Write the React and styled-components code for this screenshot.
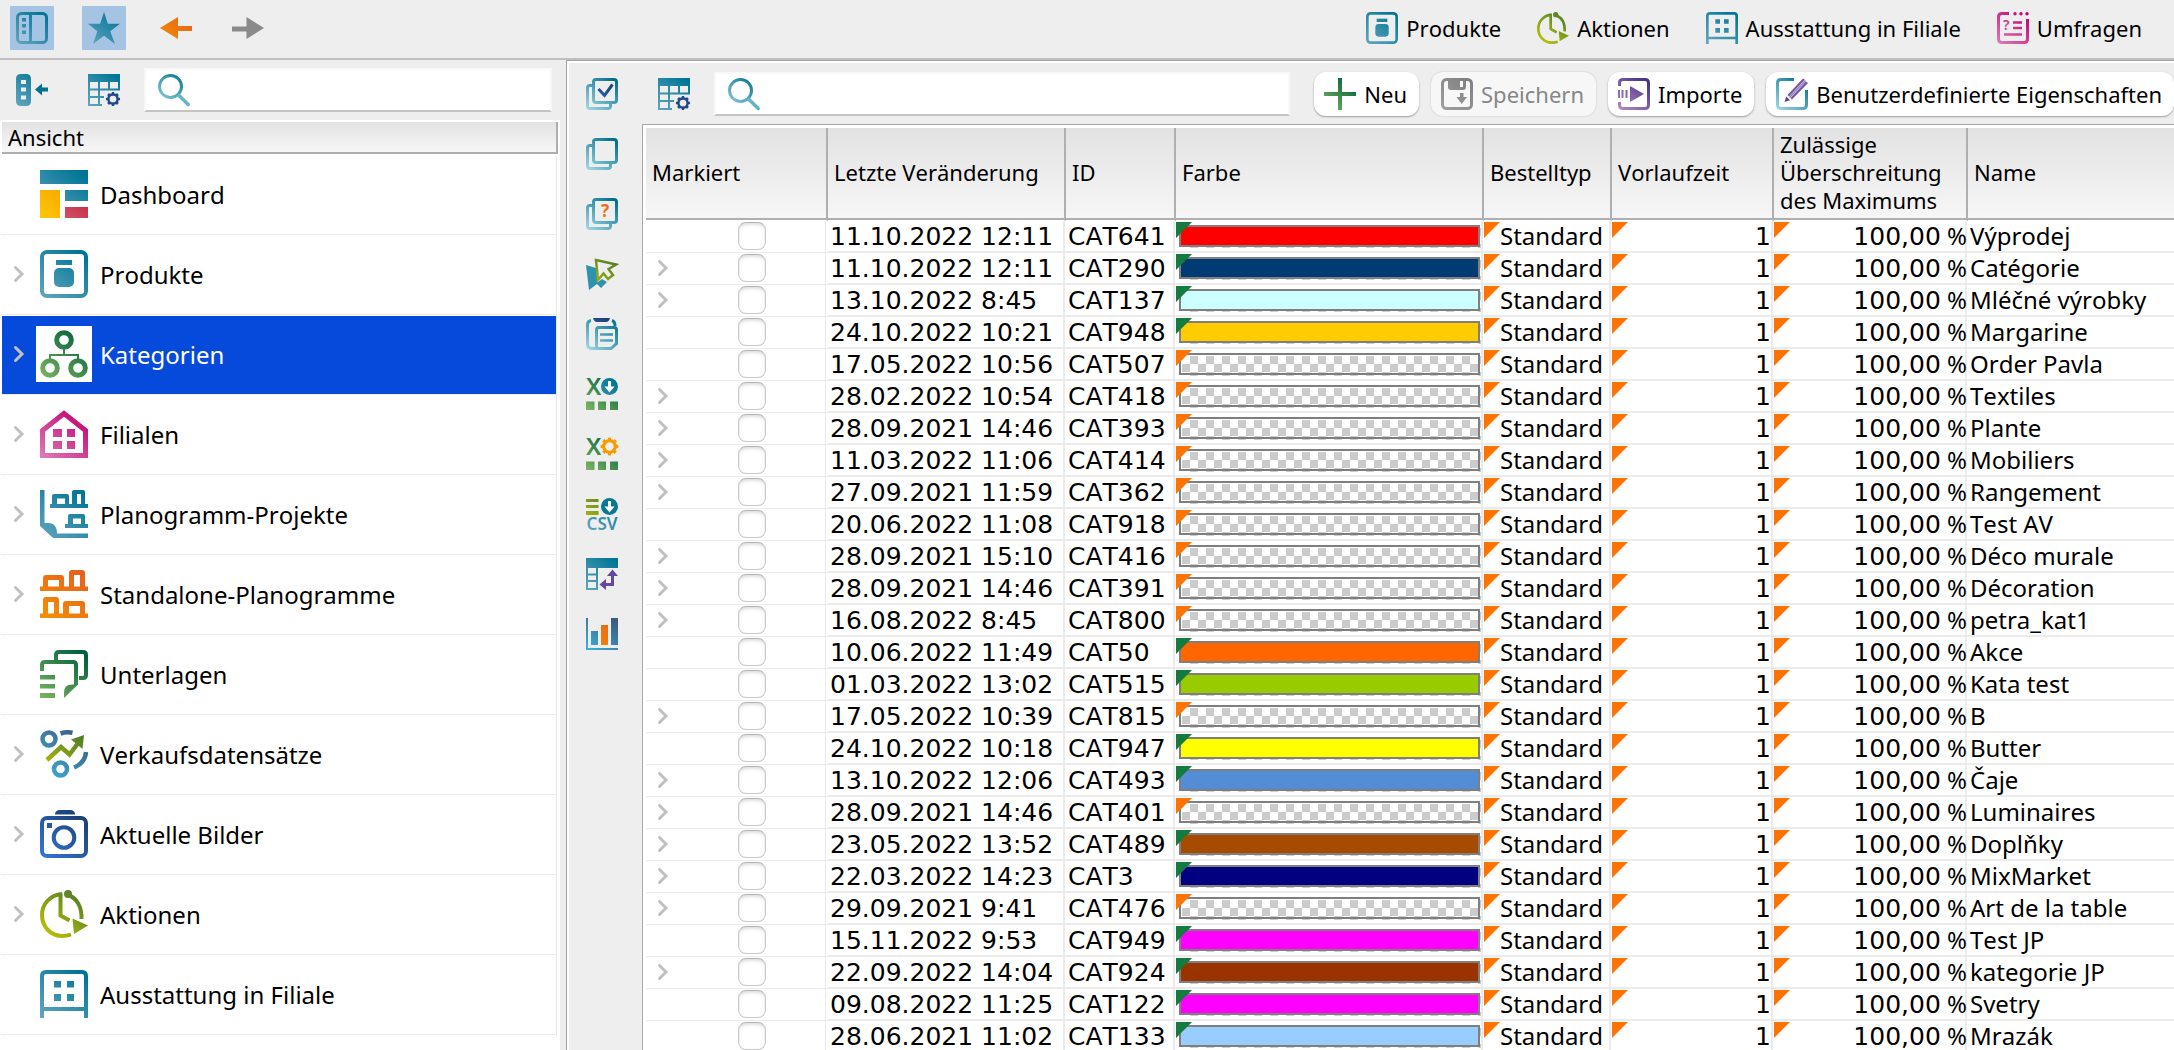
import React, { useId, useState } from "react";
import styled, { createGlobalStyle, css } from "styled-components";

const sans = '"Noto Sans", "Open Sans", sans-serif';
const wide = '"DejaVu Sans", "Noto Sans", sans-serif';
const surface = "#eeeeee";
const hairline = "#ebebeb";

const GlobalStyle = createGlobalStyle`
  *, *::before, *::after { box-sizing: border-box; }
  body { margin: 0; background: ${surface}; color: #000; font-family: ${sans}; font-kerning: none; }
  button, input { font: inherit; color: inherit; }
  svg { display: block; overflow: visible; }
`;

/* ---------- icons ---------- */

const tones = {
  teal: ["#64a6bf", "#007595"],
  aqua: ["#a5dbe6", "#00708f"],
  green: ["#7fb662", "#00603c"],
  magenta: ["#dd7fb9", "#c4006f"],
  orange: ["#f39200", "#e8601c"],
  lime: ["#c9c900", "#4a7a2c"],
  blue: ["#3578dc", "#1a3c6e"],
  sky: ["#3cb4dc", "#3d5a80"],
  purple: ["#b98cc0", "#46338a"],
  amber: ["#ffc800", "#f39200"],
  red: ["#d9667c", "#b8142c"],
  grey: ["#a0a0a0", "#808080"],
};

function Icon({ box = 32, size = box, use, children }) {
  const id = useId();
  const paint = {};
  use.forEach((name) => {
    paint[name] = `url(#${id}${name})`;
  });
  return (
    <svg width={size} height={size} viewBox={`0 0 ${box} ${box}`} fill="none" aria-hidden="true">
      <defs>
        {use.map((name) => (
          <linearGradient key={name} id={id + name} gradientUnits="userSpaceOnUse" x1="0" y1={box} x2={box * 0.8} y2="0">
            <stop offset="0" stopColor={tones[name][0]} />
            <stop offset="1" stopColor={tones[name][1]} />
          </linearGradient>
        ))}
      </defs>
      {children(paint)}
    </svg>
  );
}

const DashboardIcon = () => (
  <Icon box={48} use={["teal", "amber", "red"]}>
    {(p) => (
      <>
        <path fill={p.teal} d="M0 0h48v14H0zM25 20h23v11H25z" />
        <path fill={p.amber} d="M0 20h20v28H0z" />
        <path fill={p.red} d="M25 37h23v11H25z" />
      </>
    )}
  </Icon>
);

const ProductIcon = ({ size }) => (
  <Icon box={48} size={size} use={["teal"]}>
    {(p) => (
      <>
        <rect x="2" y="2" width="44" height="44" rx="5" stroke={p.teal} strokeWidth="4" />
        <rect x="16" y="10" width="16" height="5" fill={p.teal} />
        <rect x="14" y="18" width="20" height="19" rx="5" fill={p.teal} />
      </>
    )}
  </Icon>
);

const CategoryIcon = () => (
  <Icon box={48} use={["green"]}>
    {(p) => (
      <>
        <g stroke={p.green} strokeWidth="5">
          <circle cx="24" cy="10" r="7.3" />
          <circle cx="10" cy="38" r="7.3" />
          <circle cx="38" cy="38" r="7.3" />
        </g>
        <path stroke={p.green} strokeWidth="2" d="M24 19v6M10 30v-5h28v5" />
      </>
    )}
  </Icon>
);

const StoreIcon = () => (
  <Icon box={48} use={["magenta"]}>
    {(p) => (
      <>
        <path stroke={p.magenta} strokeWidth="5" d="M2.5 20.5 24 3.5l21.500 17v25h-43z" />
        <path fill={p.magenta} d="M13 19h9v8h-9zM27 19h8v8h-8zM13 31h9v8h-9zM27 31h8v8h-8z" />
      </>
    )}
  </Icon>
);

const PlanogramIcon = () => (
  <Icon box={48} use={["teal"]}>
    {(p) => (
      <>
        <path fill={p.teal} d="M0 0h4.500v33H8c6 0 9 4 9 10.500h31V48H13L0 36z" />
        <path fill={p.teal} fillRule="evenodd" d="M10 14h2V6q0-2 2-2h13q2 0 2 2v8h3V2q0-2 2-2h9q2 0 2 2v12h3v4H10zM17 8.500v5.500h8V8.500zM37 4v10h4V4z" />
        <path fill={p.teal} fillRule="evenodd" d="M25 34h3v-8q0-2 2-2h13q2 0 2 2v8h3v4H25zM33 28.500v5.500h8v-5.500z" />
      </>
    )}
  </Icon>
);

const ShelfIcon = () => (
  <Icon box={48} use={["orange"]}>
    {(p) => (
      <>
        <path fill={p.orange} fillRule="evenodd" d="M0 16.500h3V8q0-3 3-3h15q3 0 3 3v8.500h5V3q0-3 3-3h10q3 0 3 3v13.500h3V21H0zM8 10v6.500h11V10zM34 5v11.500h6V5z" />
        <path fill={p.orange} fillRule="evenodd" d="M0 43.500h3V30q0-3 3-3h10q3 0 3 3v13.500h4V34q0-3 3-3h16q3 0 3 3v9.500h3V48H0zM8 32v11.500h6V32zM29 36v7.500h11V36z" />
      </>
    )}
  </Icon>
);

const DocumentsIcon = () => (
  <Icon box={48} use={["green"]}>
    {(p) => (
      <>
        <path stroke={p.green} strokeWidth="4" d="M16 11V5q0-3 3-3h24q3 0 3 3v20q0 3-3 3h-4M2 21v-6q0-3 3-3h28q3 0 3 3v20" />
        <path fill={p.green} d="M0 25h15v4.500H0zM0 34h15v4.500H0zM0 43h15v5H0zM38 34.500h-6q-8 0-8 8V48z" />
      </>
    )}
  </Icon>
);

const SalesIcon = () => (
  <Icon box={48} use={["sky", "lime"]}>
    {(p) => (
      <>
        <g stroke={p.sky} strokeWidth="4.500">
          <circle cx="9" cy="9" r="6.500" />
          <circle cx="20.500" cy="39" r="6.500" />
          <path d="M20.500 3.500q6-2 12-.8M46 22q-1 11-12 15.500" />
        </g>
        <path stroke={p.lime} strokeWidth="4.500" d="M7 30 21 17l8.500 7.500L39 12" />
        <path fill={p.lime} d="m44 5-13 4.500L42.500 19z" />
      </>
    )}
  </Icon>
);

const CameraIcon = () => (
  <Icon box={48} use={["blue"]}>
    {(p) => (
      <>
        <path fill={p.blue} d="M15 4.500Q15 0 20 0h10q5 0 5 4.500z" />
        <rect x="2" y="8" width="44" height="38" rx="5" stroke={p.blue} strokeWidth="4" />
        <circle cx="24" cy="27.500" r="10.300" stroke={p.blue} strokeWidth="4" />
        <path fill={p.blue} d="M7 13h5v5H7z" />
      </>
    )}
  </Icon>
);

const ClockIcon = ({ size }) => (
  <Icon box={48} size={size} use={["lime"]}>
    {(p) => (
      <>
        <g stroke={p.lime} strokeWidth="4">
          <path d="M22 4C10 5 2 14 2 25c0 12 9 21 20 21q5 0 9-1.500M28 5c9 3 14 12 13.500 24" />
          <path d="M20.500 3v22.500l9 5" />
        </g>
        <circle cx="28" cy="4" r="4" fill={p.lime} />
        <path fill={p.lime} d="m32.500 28.500 15.500 7-14 8.500z" />
      </>
    )}
  </Icon>
);

const FittingsIcon = ({ size }) => (
  <Icon box={48} size={size} use={["teal"]}>
    {(p) => (
      <>
        <path stroke={p.teal} strokeWidth="4" d="M2 48V6q0-4 4-4h36q4 0 4 4v42M2 39h44" />
        <path fill={p.teal} d="M14 11h7v6.500h-7zM27 11h7v6.500h-7zM14 24h7v7h-7zM27 24h7v7h-7z" />
      </>
    )}
  </Icon>
);

const SurveyIcon = () => (
  <Icon use={["magenta"]}>
    {(p) => (
      <>
        <path stroke={p.magenta} strokeWidth="3" d="M12 1.500H5Q1.500 1.500 1.500 5v22q0 3.500 3.500 3.500h22q3.500 0 3.500-3.500V7" />
        <path stroke={p.magenta} strokeWidth="2.500" d="M16 10.500h9M16 16h9M7 22.500h18" />
        <g fill={p.magenta}>
          <circle cx="18" cy="1.800" r="1.700" />
          <circle cx="24" cy="1.800" r="1.700" />
          <circle cx="30" cy="1.800" r="1.700" />
          <text x="6" y="18" fontFamily={sans} fontSize="14" fontWeight="600">?</text>
        </g>
      </>
    )}
  </Icon>
);

const SidebarIcon = () => (
  <Icon use={["teal"]}>
    {(p) => (
      <>
        <rect x="1.500" y="1.500" width="29" height="29" rx="4" stroke={p.teal} strokeWidth="3" />
        <path stroke={p.teal} strokeWidth="3" d="M14.500 2v28" />
        <path fill={p.teal} d="M6 6h4v3.500H6zM6 12h4v3.500H6zM6 18.500h4V22H6z" />
      </>
    )}
  </Icon>
);

const StarIcon = () => (
  <Icon use={["teal"]}>
    {(p) => <path fill={p.teal} d="m16 0 3.800 11.800H32l-9.800 7.400L27 32l-11-8.200L5 32l4.300-12.800L0 11.800h12.200z" />}
  </Icon>
);

const BackIcon = () => (
  <Icon use={["orange"]}>{(p) => <path fill={p.orange} d="M0 16 18 5v9h14v5H18v8z" />}</Icon>
);

const ForwardIcon = () => (
  <Icon use={["grey"]}>{() => <path fill="#8a8a8a" d="M32 16 14.500 5v9.500H0v5h14.500V27z" />}</Icon>
);

const CollapseIcon = () => (
  <Icon use={["teal"]}>
    {(p) => (
      <>
        <path fill={p.teal} fillRule="evenodd" d="M5 0h5q5 0 5 5v22q0 5-5 5H5q-5 0-5-5V5q0-5 5-5zM5 6v4h5V6zM5 13.500v4h5v-4zM5 21.500v4h5v-4z" />
        <path fill="#00728f" d="m19 15.500 7-6V13.500h6v4h-6v4z" />
      </>
    )}
  </Icon>
);

const Gear = ({ cx, cy, r, color }) => (
  <g stroke={color} transform={`translate(${cx} ${cy})`}>
    <circle r={r * 0.66} strokeWidth={r * 0.36} />
    <circle r={r * 0.86} strokeWidth={r * 0.3} pathLength="16" strokeDasharray="1 1" strokeDashoffset="0.500" />
  </g>
);

const TableSettingsIcon = () => (
  <Icon use={["teal", "blue"]}>
    {(p) => (
      <>
        <path fill={p.teal} d="M0 0h32v8H0z" />
        <path stroke={p.teal} strokeWidth="2" d="M1 8v23h13M0 15.500h32M0 23h16M11 8v23M21 8v7.500M31 8v8" />
        <Gear cx={25} cy={25} r={7} color="#1f4a8c" />
      </>
    )}
  </Icon>
);

const SearchIcon = () => (
  <Icon use={["aqua"]}>
    {(p) => (
      <>
        <circle cx="12.500" cy="12.500" r="11" stroke={p.aqua} strokeWidth="3" />
        <path stroke="#62b4c6" strokeWidth="3.500" strokeLinecap="round" d="m21 21.500 9.200 9" />
      </>
    )}
  </Icon>
);

const StackIcon = ({ children }) => (
  <Icon use={["aqua", "blue", "orange"]}>
    {(p) => (
      <>
        <rect x="7.500" y="1.500" width="23" height="23" rx="2.500" stroke={p.aqua} strokeWidth="3" />
        <path stroke={p.aqua} strokeWidth="3" d="M6 7.500H4Q1.500 7.500 1.500 10v18q0 2.500 2.500 2.500h18q2.500 0 2.500-2.500v-2" />
        {children && children(p)}
      </>
    )}
  </Icon>
);

const CheckAllIcon = () => (
  <StackIcon>{(p) => <path stroke={p.blue} strokeWidth="3" d="m12.500 11 6 6.500 8-11" />}</StackIcon>
);
const UncheckAllIcon = () => <StackIcon />;
const InvertIcon = () => (
  <StackIcon>
    {(p) => (
      <text x="19" y="19" textAnchor="middle" fontFamily={sans} fontSize="17" fontWeight="700" fill={p.orange}>?</text>
    )}
  </StackIcon>
);

const PointerIcon = () => (
  <Icon use={["aqua", "lime"]}>
    {(p) => (
      <>
        <path fill="#2f92ad" d="m0 7 10 3 2 14 4-3 5 3-6 6-4-4-8 6z" />
        <path fill={surface} stroke={p.lime} strokeWidth="2.500" d="M10 2 30 6.500 22.500 11l4.500 6-5 4-4.500-5.500L12 22z" />
      </>
    )}
  </Icon>
);

const ClipboardIcon = () => (
  <Icon use={["aqua", "blue"]}>
    {(p) => (
      <>
        <path fill={p.blue} d="M7 0h17q-1 4-4 4h-9Q8 4 7 0z" />
        <path stroke={p.aqua} strokeWidth="3" d="M5 2.500Q1.500 3 1.500 7v19q0 4.500 4.500 4.500h19l5.500-5V12q0-2.500-2.500-2.500H13Q10.500 9.500 10.500 12v18M26 2.500q3 1 3 5.500" />
        <path stroke={p.aqua} strokeWidth="2.500" d="M14 16.400h13M14 22.600h13" />
      </>
    )}
  </Icon>
);

const SheetSquares = ({ fill }) => <path fill={fill} d="M0 23.500h8.500V32H0zM12 23.500h8V32h-8zM24 23.500h8V32h-8z" />;
const DownBadge = ({ fill }) => (
  <>
    <circle cx="23.500" cy="8.500" r="8.500" fill={fill} />
    <path fill="#fff" d="M22 3h3v5.500h3.500l-5 6-5-6H22z" />
  </>
);

const ExcelExportIcon = () => (
  <Icon use={["green", "teal"]}>
    {(p) => (
      <>
        <text x="0" y="17" fontFamily={sans} fontSize="24" fontWeight="600" fill={p.green}>X</text>
        <DownBadge fill={p.teal} />
        <SheetSquares fill={p.green} />
      </>
    )}
  </Icon>
);

const ExcelSettingsIcon = () => (
  <Icon use={["green", "amber"]}>
    {(p) => (
      <>
        <text x="0" y="17" fontFamily={sans} fontSize="24" fontWeight="600" fill={p.green}>X</text>
        <Gear cx={23.5} cy={8.5} r={8.8} color="#f59c00" />
        <SheetSquares fill={p.green} />
      </>
    )}
  </Icon>
);

const CsvIcon = () => (
  <Icon use={["lime", "teal"]}>
    {(p) => (
      <>
        <path fill={p.lime} d="M0 1h12.500v3H0zM0 7h12.500v3H0zM0 13h12.500v4H0z" />
        <DownBadge fill="#087896" />
        <text x="16" y="32" textAnchor="middle" fontFamily={sans} fontSize="17" fontWeight="600" fill={p.teal}>CSV</text>
      </>
    )}
  </Icon>
);

const PivotIcon = () => (
  <Icon use={["teal", "purple"]}>
    {(p) => (
      <>
        <path fill={p.teal} d="M0 0h32v10H0z" />
        <path stroke={p.teal} strokeWidth="2" d="M1 10v21h10V10M1 16.500h10M1 23h10" />
        <path fill="#64499a" d="m26.500 11.500 5.500 6.500h-4v10h-8v4l-6.500-5.500L20 21v4h5v-7h-4z" />
      </>
    )}
  </Icon>
);

const ChartIcon = () => (
  <Icon use={["sky", "orange"]}>
    {(p) => (
      <>
        <path stroke={p.sky} strokeWidth="2" d="M1 0v31h31" />
        <path fill={p.sky} d="M5 13h7v14H5zM25 0h7v27h-7z" />
        <path fill={p.orange} d="M15 7h7v20h-7z" />
      </>
    )}
  </Icon>
);

const PlusIcon = () => (
  <Icon use={["green"]}>{(p) => <path fill={p.green} d="M14 0h4v14h14v4H18v14h-4V18H0v-4h14z" />}</Icon>
);

const SaveIcon = () => (
  <Icon use={["grey"]}>
    {(p) => (
      <>
        <rect x="1.500" y="1.500" width="29" height="29" rx="4" stroke={p.grey} strokeWidth="3" />
        <path fill={p.grey} fillRule="evenodd" d="M7 1h18v8q0 3-3 3H10q-3 0-3-3zM19 3v6h3V3zM19 15h3.500v4H26l-5.300 7-5.200-7H19z" />
      </>
    )}
  </Icon>
);

const ImportIcon = () => (
  <Icon use={["purple"]}>
    {(p) => (
      <>
        <path stroke={p.purple} strokeWidth="3" d="M1.500 8V5q0-3.500 3.500-3.500h22q3.500 0 3.500 3.500v22q0 3.500-3.500 3.500H5Q1.500 30.500 1.500 27v-3" />
        <path fill={p.purple} d="M0 12h2v8H0zM3.500 12h2v8h-2zM7.500 12h2v8h-2zM12 8l14 8-14 8z" />
      </>
    )}
  </Icon>
);

const EditIcon = () => (
  <Icon use={["aqua"]}>
    {(p) => (
      <>
        <path stroke={p.aqua} strokeWidth="3" d="M18 1.500H5Q1.500 1.500 1.500 5v22q0 3.500 3.500 3.500h22q3.500 0 3.500-3.500V12" />
        <path fill="#5b429a" d="m8.500 24 1.800-5.500 3.700 3.700z" />
        <path fill="#7457a6" d="M11.500 17 27 .5l1.800 1.300L13 18.500zM14.500 20 30 3.500 32 5 16 21.500z" />
        <path stroke="#9c7fba" strokeWidth="1.500" d="M13.500 19.500 29.500 2.500" />
      </>
    )}
  </Icon>
);

const Chevron = () => (
  <svg width="10" height="16" viewBox="0 0 10 16" fill="none" aria-hidden="true">
    <path d="m1.500 1.500 6.500 6.500-6.500 6.500" stroke="#c0c0c0" strokeWidth="3" strokeLinecap="round" />
  </svg>
);

/* ---------- layout ---------- */

const Shell = styled.div`
  display: flex;
  flex-direction: column;
  height: 100vh;
  overflow: hidden;
`;

const TopBar = styled.header`
  display: flex;
  align-items: center;
  justify-content: space-between;
  flex: none;
  height: 60px;
  padding: 0 32px 2px 10px;
  border-bottom: 2px solid #bfbfbf;
`;

const ToolGroup = styled.div`
  display: flex;
  gap: 28px;
`;

const PlainButton = styled.button`
  display: grid;
  place-items: center;
  padding: 0;
  border: 0;
  background: none;
`;

const ToggleButton = styled(PlainButton)`
  width: 44px;
  height: 44px;
  background: ${(p) => (p["aria-pressed"] ? "#a5c3e3" : "none")};
`;

const ShortcutNav = styled.nav`
  display: flex;
  gap: 36px;
`;

const Shortcut = styled.a`
  display: flex;
  align-items: center;
  gap: 8px;
  color: #000;
  font-size: 22px;
  line-height: 30px;
  text-decoration: none;
  white-space: nowrap;
`;

const Body = styled.div`
  display: flex;
  flex: 1;
  min-height: 0;
`;

const Sidebar = styled.aside`
  display: flex;
  flex-direction: column;
  flex: none;
  width: 566px;
  padding-right: 6px;
`;

const SidebarTools = styled.div`
  display: flex;
  align-items: center;
  flex: none;
  gap: 24px;
  height: 60px;
  padding: 0 8px 0 16px;
`;

const SidebarButtons = styled.div`
  display: flex;
  gap: 40px;
`;

const SearchBox = styled.label`
  display: flex;
  align-items: center;
  flex: 1;
  min-width: 0;
  height: 44px;
  padding: 0 12px;
  background: #fff;
  border: 2px solid #f8f8f8;
  border-bottom-color: #c4c4c4;
`;

const SearchInput = styled.input.attrs({ type: "text" })`
  flex: 1;
  min-width: 0;
  padding: 0 8px;
  border: 0;
  outline: 0;
  background: none;
  font-size: 22px;
`;

const ViewPanel = styled.nav`
  flex: 1;
  min-height: 0;
  padding: 2px 2px 0;
  background: #fff;
  overflow: hidden;
`;

const headerShade = css`
  background: linear-gradient(#e2e2e2, #f7f7f7);
`;

const ViewTitle = styled.h2`
  ${headerShade}
  height: 32px;
  margin: 0 0 2px;
  padding-left: 6px;
  border-right: 2px solid #afafaf;
  border-bottom: 2px solid #afafaf;
  font-size: 22px;
  font-weight: 400;
  line-height: 30px;
`;

const ViewList = styled.ul`
  margin: 0 1px 0 0;
  padding: 0;
  list-style: none;
  border-right: 1px solid ${hairline};
`;

const ViewItem = styled.li`
  padding-bottom: 1px;
`;

const ViewLink = styled.a`
  display: grid;
  grid-template-columns: 34px 56px 1fr;
  align-items: center;
  height: 79px;
  padding-bottom: 2px;
  border-bottom: 1px solid ${hairline};
  color: ${(p) => (p.$active ? "#fff" : "#000")};
  background: ${(p) => (p.$active ? "#064adb" : "none")};
  font-size: 24px;
  text-decoration: none;
`;

const ChevronSlot = styled.span`
  padding-left: 12px;
`;

const Tile = styled.span`
  display: grid;
  place-items: center;
  width: 56px;
  height: 56px;
  background: #fff;
`;

const ViewName = styled.span`
  padding-left: 8px;
`;

const Workspace = styled.main`
  display: flex;
  flex: 1;
  min-width: 0;
  border-top: 1px solid #a3a3a3;
  border-left: 1px solid #a3a3a3;
  box-shadow: inset 2px 2px #fff;
  padding: 2px 0 0 2px;
`;

const Rail = styled.div`
  display: flex;
  flex-direction: column;
  flex: none;
  gap: 28px;
  width: 73px;
  padding: 15px 0 0 17px;
  align-items: flex-start;
`;

const Content = styled.section`
  display: flex;
  flex-direction: column;
  flex: 1;
  min-width: 0;
`;

const ContentTools = styled.div`
  display: flex;
  align-items: center;
  flex: none;
  gap: 24px;
  height: 61px;
  padding-left: 16px;
`;

const Actions = styled.div`
  display: flex;
  gap: 12px;
`;

const ActionButton = styled.button`
  display: flex;
  align-items: center;
  gap: 8px;
  height: 44px;
  padding: 0 12px 0 10px;
  border: 0;
  border-radius: 12px;
  background: #fff;
  box-shadow: 0 1px 2px rgba(0, 0, 0, 0.35);
  font-size: 22px;
  line-height: 30px;
  white-space: nowrap;

  &:disabled {
    color: #868686;
    background: #f7f7f7;
    box-shadow: 0 0 2px rgba(0, 0, 0, 0.2);
  }
`;

const GridFrame = styled.div`
  flex: 1;
  min-height: 0;
  padding: 3px 0 0 3px;
  border-top: 1px solid #a8a8a8;
  border-left: 1px solid #a8a8a8;
  background: #fff;
  overflow: hidden;
`;

const DataTable = styled.table`
  width: 100%;
  table-layout: fixed;
  border-collapse: separate;
  border-spacing: 0;
`;

const HeadCell = styled.th`
  ${headerShade}
  background-clip: padding-box;
  height: 93px;
  padding: 0 5px 4px 6px;
  border-right: 2px solid #afafaf;
  border-bottom: 1px solid #fff;
  box-shadow: inset 0 -2px #afafaf;
  font-size: 22px;
  font-weight: 400;
  line-height: 28px;
  text-align: left;

  &:last-child {
    border-right: 0;
  }
`;

const cornerTones = { green: "#147a3f", orange: "#ff7300" };

const Cell = styled.td`
  position: relative;
  height: 32px;
  padding: 0 3px 2px ${(p) => p.$indent || "2px"};
  box-shadow: inset 0 -2px ${hairline}, inset -1px 0 #fff, inset -3px 0 ${hairline};
  font-size: 24px;
  line-height: 30px;
  text-align: ${(p) => p.$align || "left"};
  white-space: nowrap;
  vertical-align: top;

  &:last-child {
    box-shadow: inset 0 -2px ${hairline};
  }

  ${(p) =>
    p.$corner &&
    css`
      &::before {
        content: "";
        position: absolute;
        z-index: 1;
        top: 1px;
        left: 0;
        width: 16px;
        height: 16px;
        background: ${cornerTones[p.$corner]};
        clip-path: polygon(0 0, 100% 0, 0 100%);
      }
    `}
`;

const MarkCell = styled(Cell)`
  padding: 1px 0 0 12px;
  box-shadow: inset 0 -1px ${hairline}, inset -2px 0 #fff, inset -3px 0 ${hairline};
`;

const PercentCell = styled(Cell)`
  padding-right: 1px;
`;

const MarkGrid = styled.div`
  display: grid;
  grid-template-columns: 80px 28px;
  align-items: center;
`;

const ExpandButton = styled(PlainButton)`
  width: 80px;
  place-items: center start;
`;

const RowCheck = styled.input.attrs({ type: "checkbox" })`
  grid-column: 2;
  appearance: none;
  width: 28px;
  height: 28px;
  margin: 0;
  border: 1px solid #c9c9c9;
  border-top-color: #b4b4b4;
  border-radius: 8px;
  background: #fff;
  box-shadow: inset 0 2px 3px #e0e0e0;

  &:checked {
    background: #064adb;
  }
`;

const Digits = styled.span`
  font-family: ${wide};
  font-size: 25px;
  line-height: 20px;
`;

const Swatch = styled.div`
  position: relative;
  height: 23px;
  margin-top: 4px;

  &::before {
    content: "";
    position: absolute;
    inset: 3px 0 0 3px;
    background: repeating-conic-gradient(#ccc 0 25%, #fff 0 50%) 0 0 / 16px 16px;
  }

  &::after {
    content: "";
    position: absolute;
    inset: 0 1px 1px 0;
    border: 2px solid #7f7f7f;
    background: ${(p) => p.$color || "transparent"};
  }
`;

/* ---------- data ---------- */

const views = [
  ["Dashboard", DashboardIcon, false],
  ["Produkte", ProductIcon, true],
  ["Kategorien", CategoryIcon, true],
  ["Filialen", StoreIcon, true],
  ["Planogramm-Projekte", PlanogramIcon, true],
  ["Standalone-Planogramme", ShelfIcon, true],
  ["Unterlagen", DocumentsIcon, false],
  ["Verkaufsdatensätze", SalesIcon, true],
  ["Aktuelle Bilder", CameraIcon, true],
  ["Aktionen", ClockIcon, true],
  ["Ausstattung in Filiale", FittingsIcon, false],
];

const shortcuts = [
  ["Produkte", ProductIcon],
  ["Aktionen", ClockIcon],
  ["Ausstattung in Filiale", FittingsIcon],
  ["Umfragen", SurveyIcon],
];

const railTools = [
  ["Alle markieren", CheckAllIcon],
  ["Markierung aufheben", UncheckAllIcon],
  ["Markierung umkehren", InvertIcon],
  ["Auswahl", PointerIcon],
  ["Einfügen", ClipboardIcon],
  ["Excel-Export", ExcelExportIcon],
  ["Excel-Einstellungen", ExcelSettingsIcon],
  ["CSV-Export", CsvIcon],
  ["Pivot", PivotIcon],
  ["Diagramm", ChartIcon],
];

const columns = [
  ["Markiert", "182px"],
  ["Letzte Veränderung", "238px"],
  ["ID", "110px"],
  ["Farbe", "308px"],
  ["Bestelltyp", "128px"],
  ["Vorlaufzeit", "162px"],
  ["Zulässige Überschreitung des Maximums", "194px"],
  ["Name", "auto"],
];

const rows = [
  ["11.10.2022 12:11", "CAT641", "#ff0000", "Výprodej", false],
  ["11.10.2022 12:11", "CAT290", "#003c73", "Catégorie", true],
  ["13.10.2022 8:45", "CAT137", "#ccffff", "Mléčné výrobky", true],
  ["24.10.2022 10:21", "CAT948", "#ffcc00", "Margarine", false],
  ["17.05.2022 10:56", "CAT507", null, "Order Pavla", false],
  ["28.02.2022 10:54", "CAT418", null, "Textiles", true],
  ["28.09.2021 14:46", "CAT393", null, "Plante", true],
  ["11.03.2022 11:06", "CAT414", null, "Mobiliers", true],
  ["27.09.2021 11:59", "CAT362", null, "Rangement", true],
  ["20.06.2022 11:08", "CAT918", null, "Test AV", false],
  ["28.09.2021 15:10", "CAT416", null, "Déco murale", true],
  ["28.09.2021 14:46", "CAT391", null, "Décoration", true],
  ["16.08.2022 8:45", "CAT800", null, "petra_kat1", true],
  ["10.06.2022 11:49", "CAT50", "#ff6600", "Akce", false],
  ["01.03.2022 13:02", "CAT515", "#99cc00", "Kata test", false],
  ["17.05.2022 10:39", "CAT815", null, "B", true],
  ["24.10.2022 10:18", "CAT947", "#ffff00", "Butter", false],
  ["13.10.2022 12:06", "CAT493", "#538dd5", "Čaje", true],
  ["28.09.2021 14:46", "CAT401", null, "Luminaires", true],
  ["23.05.2022 13:52", "CAT489", "#a64b00", "Doplňky", true],
  ["22.03.2022 14:23", "CAT3", "#000080", "MixMarket", true],
  ["29.09.2021 9:41", "CAT476", null, "Art de la table", true],
  ["15.11.2022 9:53", "CAT949", "#ff00ff", "Test JP", false],
  ["22.09.2022 14:04", "CAT924", "#993300", "kategorie JP", true],
  ["09.08.2022 11:25", "CAT122", "#ff00ff", "Svetry", false],
  ["28.06.2021 11:02", "CAT133", "#99ccff", "Mrazák", false],
];

/* ---------- page ---------- */

function Search({ name }) {
  return (
    <SearchBox>
      <SearchIcon />
      <SearchInput aria-label={name} />
    </SearchBox>
  );
}

function CategoryRow({ row }) {
  const [date, id, color, name, expandable] = row;
  return (
    <tr>
      <MarkCell>
        <MarkGrid>
          {expandable && (
            <ExpandButton aria-label={`${name} aufklappen`}>
              <Chevron />
            </ExpandButton>
          )}
          <RowCheck aria-label={`${name} markieren`} />
        </MarkGrid>
      </MarkCell>
      <Cell>
        <Digits>{date}</Digits>
      </Cell>
      <Cell>
        <Digits>{id}</Digits>
      </Cell>
      <Cell $corner={color ? "green" : "orange"} $indent="3px">
        <Swatch $color={color} />
      </Cell>
      <Cell $corner="orange" $indent="16px">Standard</Cell>
      <Cell $corner="orange" $align="right">
        <Digits>1</Digits>
      </Cell>
      <PercentCell $corner="orange" $align="right">
        <Digits>100,00</Digits> %
      </PercentCell>
      <Cell>{name}</Cell>
    </tr>
  );
}

export default function App() {
  const [sidebarOn, setSidebarOn] = useState(true);
  const [favouritesOn, setFavouritesOn] = useState(true);

  return (
    <Shell>
      <GlobalStyle />
      <TopBar>
        <ToolGroup>
          <ToggleButton aria-label="Seitenleiste" aria-pressed={sidebarOn} onClick={() => setSidebarOn(!sidebarOn)}>
            <SidebarIcon />
          </ToggleButton>
          <ToggleButton aria-label="Favoriten" aria-pressed={favouritesOn} onClick={() => setFavouritesOn(!favouritesOn)}>
            <StarIcon />
          </ToggleButton>
          <ToggleButton aria-label="Zurück">
            <BackIcon />
          </ToggleButton>
          <ToggleButton aria-label="Vorwärts">
            <ForwardIcon />
          </ToggleButton>
        </ToolGroup>
        <ShortcutNav>
          {shortcuts.map(([name, Glyph]) => (
            <Shortcut href="#" key={name}>
              <Glyph size={32} />
              {name}
            </Shortcut>
          ))}
        </ShortcutNav>
      </TopBar>

      <Body>
        <Sidebar>
          <SidebarTools>
            <SidebarButtons>
              <PlainButton aria-label="Einklappen">
                <CollapseIcon />
              </PlainButton>
              <PlainButton aria-label="Spalten">
                <TableSettingsIcon />
              </PlainButton>
            </SidebarButtons>
            <Search name="Ansicht suchen" />
          </SidebarTools>
          <ViewPanel>
            <ViewTitle>Ansicht</ViewTitle>
            <ViewList>
              {views.map(([name, Glyph, expandable]) => (
                <ViewItem key={name}>
                  <ViewLink href="#" $active={name === "Kategorien"}>
                    <ChevronSlot>{expandable && <Chevron />}</ChevronSlot>
                    <Tile>
                      <Glyph size={48} />
                    </Tile>
                    <ViewName>{name}</ViewName>
                  </ViewLink>
                </ViewItem>
              ))}
            </ViewList>
          </ViewPanel>
        </Sidebar>

        <Workspace>
          <Rail>
            {railTools.map(([name, Glyph]) => (
              <PlainButton key={name} aria-label={name}>
                <Glyph />
              </PlainButton>
            ))}
          </Rail>
          <Content>
            <ContentTools>
              <PlainButton aria-label="Tabelleneinstellungen">
                <TableSettingsIcon />
              </PlainButton>
              <Search name="Kategorien suchen" />
              <Actions>
                <ActionButton>
                  <PlusIcon />
                  Neu
                </ActionButton>
                <ActionButton disabled>
                  <SaveIcon />
                  Speichern
                </ActionButton>
                <ActionButton>
                  <ImportIcon />
                  Importe
                </ActionButton>
                <ActionButton>
                  <EditIcon />
                  Benutzerdefinierte Eigenschaften
                </ActionButton>
              </Actions>
            </ContentTools>
            <GridFrame>
              <DataTable>
                <colgroup>
                  {columns.map(([name, width]) => (
                    <col key={name} style={{ width }} />
                  ))}
                </colgroup>
                <thead>
                  <tr>
                    {columns.map(([name]) => (
                      <HeadCell key={name} scope="col">{name}</HeadCell>
                    ))}
                  </tr>
                </thead>
                <tbody>
                  {rows.map((row) => (
                    <CategoryRow key={row[1]} row={row} />
                  ))}
                </tbody>
              </DataTable>
            </GridFrame>
          </Content>
        </Workspace>
      </Body>
    </Shell>
  );
}
